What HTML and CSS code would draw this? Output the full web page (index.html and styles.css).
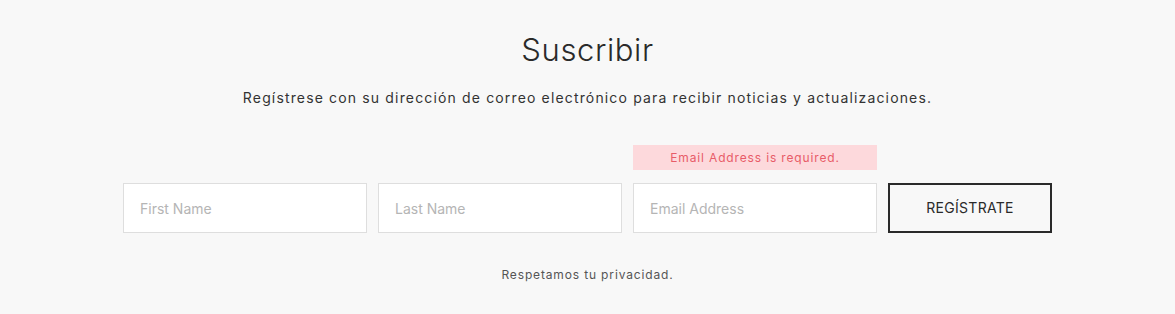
FILE: index.html
```html
<!DOCTYPE html>
<html lang="es">
<head>
<meta charset="utf-8">
<link rel="stylesheet" href="styles.css">
</head>
<body>
<section class="subscribe">
  <h2 class="title">Suscribir</h2>
  <p class="lead">Regístrese con su dirección de correo electrónico para recibir noticias y actualizaciones.</p>
  <form class="form">
    <div class="field"><div class="spacer"></div><input class="input" type="text" placeholder="First Name"></div>
    <div class="field"><div class="spacer"></div><input class="input" type="text" placeholder="Last Name"></div>
    <div class="field"><div class="error">Email Address is required.</div><input class="input" type="email" placeholder="Email Address"></div>
    <div class="field btn-field"><div class="spacer"></div><button class="btn" type="button">REGÍSTRATE</button></div>
  </form>
  <p class="note">Respetamos tu privacidad.</p>
</section>
</body>
</html>
```
FILE: styles.css
```css
html, body {
  margin: 0;
  padding: 0;
  background: #f8f8f8;
}
body {
  font-family: "Inter", "Roboto", sans-serif;
  color: #333;
}
.subscribe {
  display: flex;
  flex-direction: column;
  align-items: center;
  padding-top: 28px;
}
.title {
  margin: 0;
  font-size: 31px;
  font-weight: 300;
  letter-spacing: 0.6px;
  line-height: 44px;
  color: #2a2a2a;
}
.lead {
  margin: 16px 0 0;
  font-size: 14px;
  line-height: 20px;
  letter-spacing: 1.15px;
  color: #333;
}
.form {
  display: flex;
  gap: 11px;
  margin-top: 37px;
}
.field {
  display: flex;
  flex-direction: column;
  gap: 13px;
  width: 244px;
}
.btn-field {
  width: 164px;
}
.spacer, .error {
  height: 25px;
}
.error {
  background: #fdd9dc;
  color: #e85c68;
  font-size: 12px;
  letter-spacing: 0.85px;
  line-height: 25px;
  text-align: center;
}
.input {
  box-sizing: border-box;
  width: 100%;
  height: 50px;
  border: 1px solid #dedede;
  background: #fff;
  padding: 0 16px;
  font-family: inherit;
  font-size: 14px;
  color: #333;
  outline: none;
}
.input::placeholder {
  color: #b5b5b5;
}
.btn {
  box-sizing: border-box;
  width: 100%;
  height: 50px;
  border: 2px solid #2a2a2a;
  background: #f8f8f8;
  font-family: inherit;
  font-size: 14px;
  color: #2a2a2a;
  letter-spacing: 0.3px;
  padding-bottom: 2px;
}
.note {
  margin: 34px 0 0;
  font-size: 12px;
  letter-spacing: 0.85px;
  line-height: 16px;
  color: #555;
}
```
